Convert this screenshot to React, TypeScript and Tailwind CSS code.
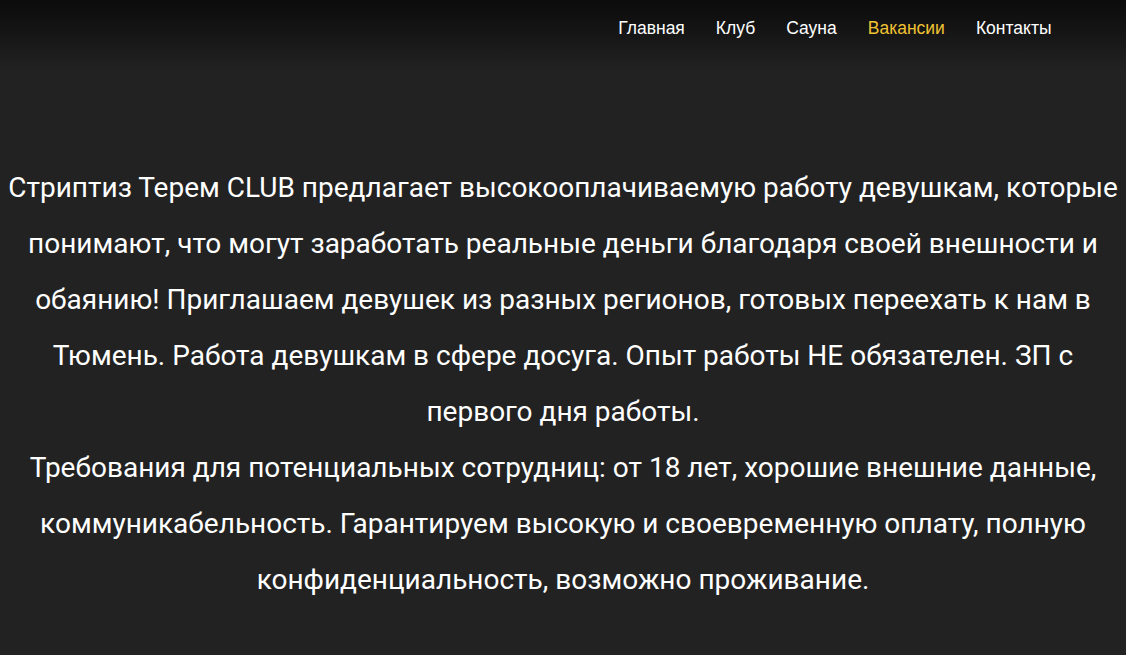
import React from 'react';

const navItems = [
  { label: 'Главная', active: false },
  { label: 'Клуб', active: false },
  { label: 'Сауна', active: false },
  { label: 'Вакансии', active: true },
  { label: 'Контакты', active: false },
];

const App: React.FC = () => {
  return (
    <div className="min-h-[655px] bg-[#222222] font-['Roboto',sans-serif] text-white">
      <header className="h-[70px] bg-gradient-to-b from-[#0b0b0b] to-[#222222]">
        <nav className="flex justify-end pt-[16px] pr-[59px] font-['Liberation_Sans',Arial,sans-serif] text-[17.5px]">
          {navItems.map(item => (
            <a
              key={item.label}
              href="#"
              className={`px-[15.5px] leading-[24px] ${item.active ? 'text-[#f0c232]' : 'text-white'}`}
            >
              {item.label}
            </a>
          ))}
        </nav>
      </header>

      <main className="px-[6px] pt-[90px] text-center text-[28px] leading-[56px]">
        <p>
          Стриптиз Терем CLUB предлагает высокооплачиваемую работу девушкам, которые понимают, что могут
          заработать реальные деньги благодаря своей внешности и обаянию! Приглашаем девушек из разных
          регионов, готовых переехать к нам в Тюмень. Работа девушкам в сфере досуга. Опыт работы НЕ
          обязателен. ЗП с первого дня работы.
          <br />
          Требования для потенциальных сотрудниц: от 18 лет, хорошие внешние данные, коммуникабельность.
          Гарантируем высокую и своевременную оплату, полную конфиденциальность, возможно проживание.
        </p>
      </main>
    </div>
  );
};

export default App;
